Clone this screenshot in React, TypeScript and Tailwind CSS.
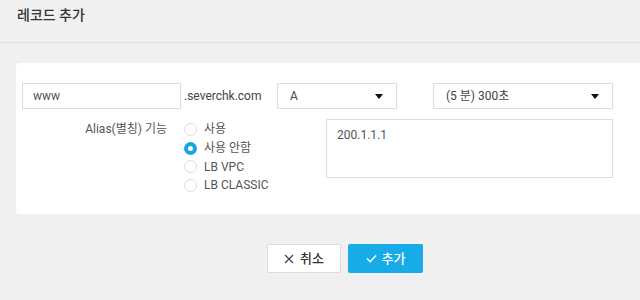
const Caret = () => (
  <svg width="8" height="5" viewBox="0 0 8 5" className="shrink-0">
    <path d="M0 0h8L4 5z" fill="#111" />
  </svg>
);

const options = ["사용", "사용 안함", "LB VPC", "LB CLASSIC"];

const App = () => {
  return (
    <div
      className="w-[640px] h-[300px] overflow-hidden bg-[#f0f0f0] text-[#555]"
      style={{ fontFamily: 'Roboto, "Noto Sans CJK KR", sans-serif' }}
    >
      <div className="h-[43px] border-b border-[#dedede] pl-[17px] pt-[5px] text-[14px] font-medium text-[#333] leading-[20px]">
        레코드 추가
      </div>

      <div className="ml-4 mt-5 w-[640px] h-[151px] rounded-[4px] bg-white pl-[6px] pt-[20px]">
        <div className="flex items-center">
          <div className="w-[159px] h-[26px] border border-[#ddd] pl-[10px] text-[12px] leading-[24px] text-[#555]">
            www
          </div>
          <span className="w-[96px] pl-[3px] text-[12px] text-[#444]">.severchk.com</span>
          <div className="flex w-[120px] h-[26px] items-center justify-between border border-[#ddd] pl-[12px] pr-[13px] text-[12px] text-[#444]">
            A
            <Caret />
          </div>
          <div className="ml-[36px] flex w-[180px] h-[26px] items-center justify-between border border-[#ddd] pl-[12px] pr-[13px] text-[12px] text-[#444]">
            (5 분) 300초
            <Caret />
          </div>
        </div>

        <div className="mt-[10px] flex">
          <div className="w-[162px] pr-[17px] text-right text-[12px] leading-[19px] pt-[1px] text-[#555]">
            Alias(별칭) 기능
          </div>
          <div className="w-[142px] flex flex-col pt-[1px]">
            {options.map((o, i) => (
              <label key={o} className="flex h-[18.7px] items-center gap-[7px] text-[12px] text-[#555]">
                {i === 1 ? (
                  <span className="box-border h-[13px] w-[13px] rounded-full border-[4px] border-[#17a5e6] bg-white" />
                ) : (
                  <span className="box-border h-[13px] w-[13px] rounded-full border border-[#ddd] bg-white" />
                )}
                {o}
              </label>
            ))}
          </div>
          <div className="w-[287px] h-[59px] border border-[#ddd] pl-[10px] pt-[6px] text-[12px] text-[#555]">
            200.1.1.1
          </div>
        </div>
      </div>

      <div className="mt-[30px] flex gap-[7px] pl-[267px]">
        <button className="flex w-[74px] h-[29px] items-center justify-center gap-[6px] rounded-[2px] border border-[#ddd] bg-white text-[13px] font-medium text-[#333]">
          <svg width="10" height="10" viewBox="0 0 10 10">
            <path d="M1 1l8 8M9 1l-8 8" stroke="#444" strokeWidth="1.2" />
          </svg>
          취소
        </button>
        <button className="flex w-[75px] h-[29px] items-center justify-center gap-[5px] rounded-[2px] bg-[#17ace8] text-[13px] font-medium text-white">
          <svg width="11" height="9" viewBox="0 0 11 9">
            <path d="M1 4.5l3.2 3.2L10 1.5" stroke="#fff" strokeWidth="1.6" fill="none" />
          </svg>
          추가
        </button>
      </div>
    </div>
  );
};

export default App;
